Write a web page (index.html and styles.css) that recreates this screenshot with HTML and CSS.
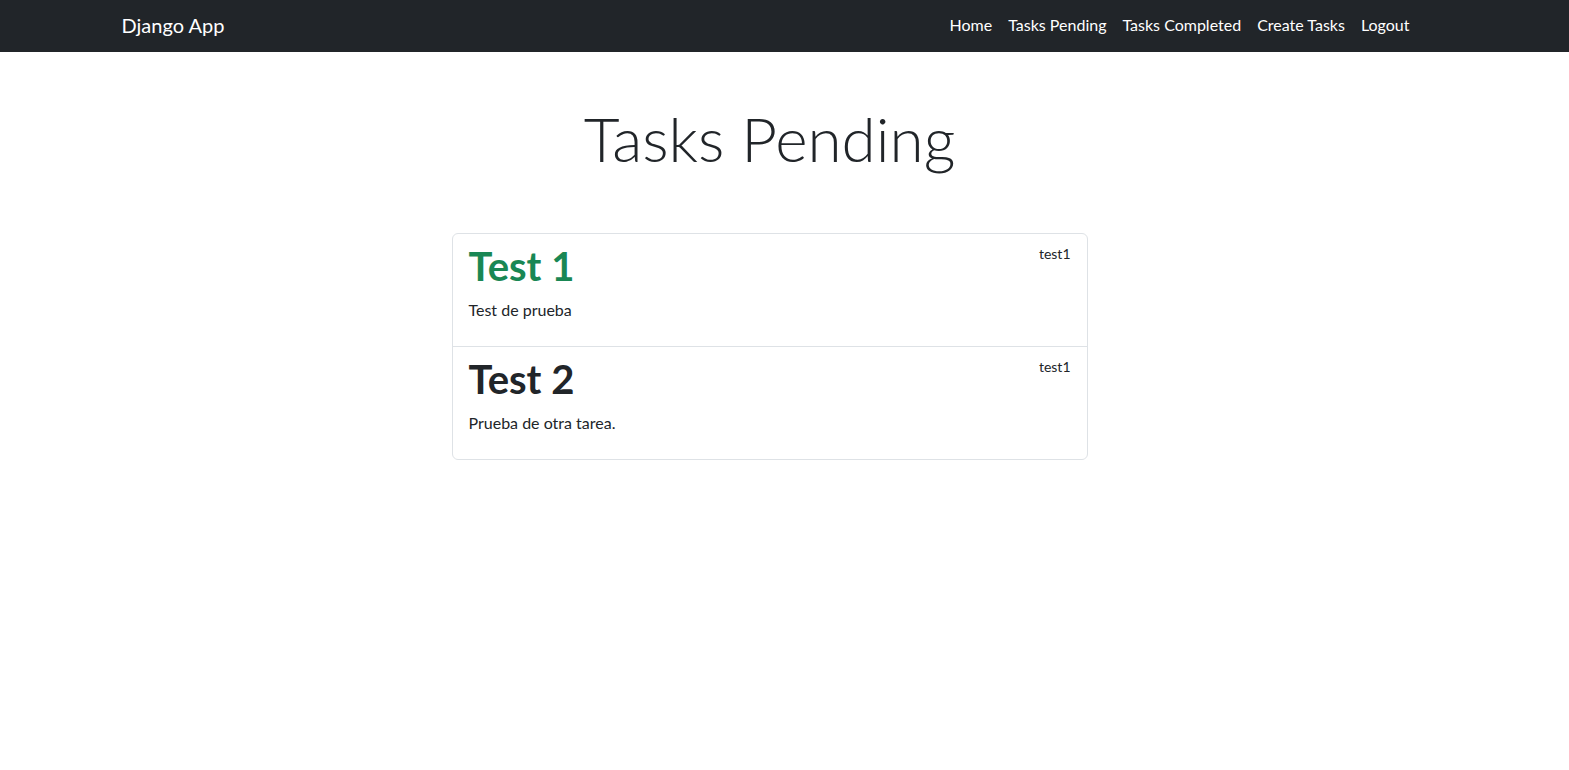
FILE: index.html
```html
<!DOCTYPE html>
<html lang="es">
<head>
<meta charset="utf-8">
<title>Django App</title>
<link rel="stylesheet" href="styles.css">
</head>
<body>
<nav class="navbar">
  <div class="container nav-inner">
    <a class="brand" href="#">Django App</a>
    <ul class="nav-links">
      <li><a class="nav-link" href="#">Home</a></li>
      <li><a class="nav-link" href="#">Tasks Pending</a></li>
      <li><a class="nav-link" href="#">Tasks Completed</a></li>
      <li><a class="nav-link" href="#">Create Tasks</a></li>
      <li><a class="nav-link" href="#">Logout</a></li>
    </ul>
  </div>
</nav>
<main class="main">
  <div class="container">
    <section class="hero">
      <h1 class="display">Tasks Pending</h1>
    </section>
    <ul class="task-list">
      <li class="task-item">
        <div class="task-head">
          <h1 class="task-title important">Test 1</h1>
          <small class="task-user">test1</small>
        </div>
        <p class="task-desc">Test de prueba</p>
      </li>
      <li class="task-item">
        <div class="task-head">
          <h1 class="task-title">Test 2</h1>
          <small class="task-user">test1</small>
        </div>
        <p class="task-desc">Prueba de otra tarea.</p>
      </li>
    </ul>
  </div>
</main>
</body>
</html>
```

FILE: styles.css
```css
* { box-sizing: border-box; }

html, body {
  margin: 0;
  padding: 0;
}

body {
  font-family: Lato, "Open Sans", "Liberation Sans", sans-serif;
  font-size: 16px;
  line-height: 1.5;
  color: #212529;
  background: #fff;
}

.container {
  max-width: 1320px;
  margin: 0 auto;
  padding: 0 12px;
}

/* navbar */
.navbar {
  background: #212529;
  padding-right: 30px;
}

.nav-inner {
  display: flex;
  align-items: center;
  justify-content: space-between;
  height: 52px;
  padding-bottom: 3px;
}

.brand {
  color: #fff;
  text-decoration: none;
  font-size: 20px;
  line-height: 30px;
}

.nav-links {
  display: flex;
  list-style: none;
  margin: 0;
  padding: 0;
}

.nav-link {
  display: block;
  padding: 8px 8px;
  color: #fff;
  text-decoration: none;
  font-size: 16px;
  line-height: 24px;
}

/* main */
.main {
  padding-right: 30px;
}

.hero {
  padding: 48px 0;
  text-align: center;
}

.display {
  margin: 0 0 8px;
  font-size: 62px;
  font-weight: 300;
  line-height: 76.8px;
}

.task-list {
  list-style: none;
  margin: 0 auto;
  padding: 0;
  width: 636px;
  border: 1px solid #dee2e6;
  border-radius: 6px;
}

.task-item {
  padding: 8px 16px;
}

.task-item + .task-item {
  border-top: 1px solid #dee2e6;
}

.task-head {
  display: flex;
  justify-content: space-between;
  align-items: flex-start;
}

.task-title {
  margin: 0 0 8px;
  font-size: 40px;
  font-weight: 700;
  line-height: 1.2;
  color: #212529;
}

.task-title.important {
  color: #198754;
}

.task-user {
  font-size: 14px;
  line-height: 24px;
}

.task-desc {
  margin: 0 0 16px;
}
```
